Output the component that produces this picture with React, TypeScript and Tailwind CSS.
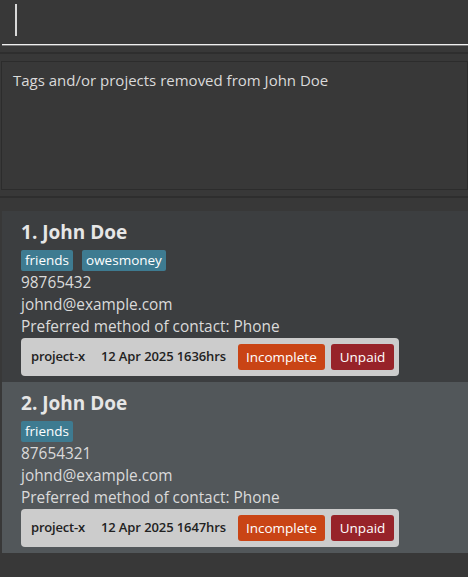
import React from 'react';

interface Person {
  index: number;
  name: string;
  tags: string[];
  phone: string;
  email: string;
  contact: string;
  project: string;
  deadline: string;
  selected?: boolean;
}

const people: Person[] = [
  {
    index: 1,
    name: 'John Doe',
    tags: ['friends', 'owesmoney'],
    phone: '98765432',
    email: 'johnd@example.com',
    contact: 'Phone',
    project: 'project-x',
    deadline: '12 Apr 2025 1636hrs',
  },
  {
    index: 2,
    name: 'John Doe',
    tags: ['friends'],
    phone: '87654321',
    email: 'johnd@example.com',
    contact: 'Phone',
    project: 'project-x',
    deadline: '12 Apr 2025 1647hrs',
    selected: true,
  },
];

function PersonCard({ person }: { person: Person }) {
  return (
    <div
      className={`h-[171px] pl-[19px] pt-[8px] ${person.selected ? 'bg-[#52575a]' : 'bg-[#3c3e40]'}`}
    >
      <div className="text-[19px] leading-[26px] font-bold text-[#e6e6e6]">
        {person.index}. {person.name}
      </div>
      <div className="flex gap-[9px] mt-[5px]">
        {person.tags.map((tag) => (
          <span
            key={tag}
            className="h-[21px] px-[4px] rounded-[2px] bg-[#3e7b91] text-white text-[13.5px] leading-[21px]"
          >
            {tag}
          </span>
        ))}
      </div>
      <div className="mt-[1px] text-[15.4px] leading-[22px] text-[#dadada]">
        <div>{person.phone}</div>
        <div>{person.email}</div>
        <div>Preferred method of contact: {person.contact}</div>
      </div>
      {/* Project row */}
      <div className="w-[378px] h-[38px] bg-[#cccccc] rounded-[4px] flex items-center pl-[10px] pr-[6px] whitespace-nowrap">
        <span className="shrink-0 text-[13px] font-semibold text-[#222222] tracking-[-0.2px]">{person.project}</span>
        <span className="shrink-0 ml-[16px] text-[13px] font-semibold text-[#222222] tracking-[-0.1px]">{person.deadline}</span>
        <span className="shrink-0 ml-[12px] h-[26px] px-[8px] rounded-[3px] bg-[#c94415] text-white text-[13.5px] leading-[26px]">
          Incomplete
        </span>
        <span className="shrink-0 ml-[6px] h-[26px] px-[9px] rounded-[3px] bg-[#972329] text-white text-[13.5px] leading-[26px]">
          Unpaid
        </span>
      </div>
    </div>
  );
}

export default function App() {
  return (
    <div
      className="w-[468px] h-[577px] bg-[#383838] overflow-hidden"
      style={{ fontFamily: '"Open Sans", "Noto Sans", sans-serif' }}
    >
      {/* Command box */}
      <div className="h-[44px] pl-[15px] pt-[4px]">
        <div className="w-[1.5px] h-[32px] bg-[#d8d8d8]" />
      </div>
      <div className="ml-[2px] h-[1px] bg-[#f0f0f0]" />
      <div className="ml-[2px] h-[1px] bg-[#7a7a7a]" />

      <div className="mt-[6px] h-[2px] bg-[#2e2e2e]" />

      {/* Result display */}
      <div className="mt-[7px] ml-[1px] h-[129px] border border-[#2c2c2c] pl-[11px] pt-[8px]">
        <div className="text-[15px] leading-[20px] text-[#dadada]">
          Tags and/or projects removed from John Doe
        </div>
      </div>

      <div className="mt-[6px] h-[2px] bg-[#2e2e2e]" />

      {/* Person list */}
      <div className="mt-[13px] ml-[2px]">
        {people.map((p) => (
          <PersonCard key={p.index} person={p} />
        ))}
      </div>
    </div>
  );
}
